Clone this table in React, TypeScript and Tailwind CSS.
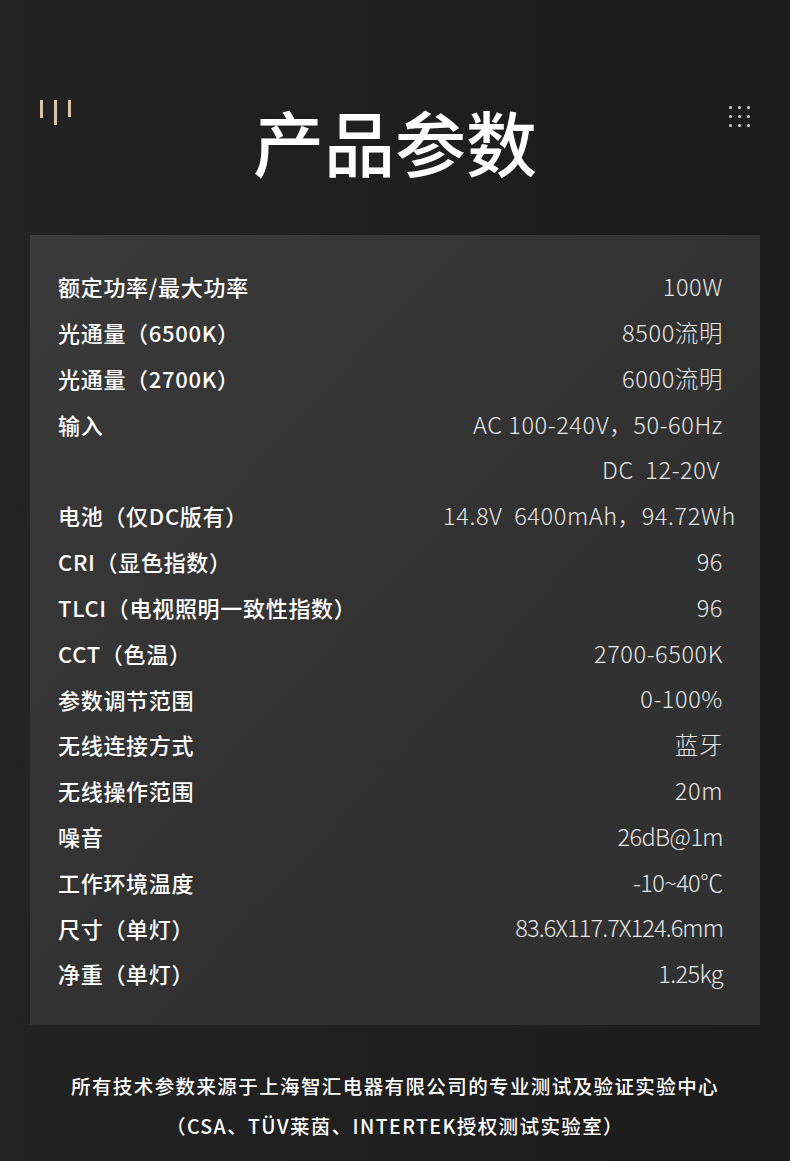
import React from "react";

const rows: { label: string; value: string; shift?: string; track?: string }[] = [
  { label: "额定功率/最大功率", value: "100W" },
  { label: "光通量（6500K）", value: "8500流明" },
  { label: "光通量（2700K）", value: "6000流明" },
  { label: "输入", value: "AC 100-240V，50-60Hz" },
  { label: "", value: "DC  12-20V", shift: "mr-[3px]" },
  { label: "电池（仅DC版有）", value: "14.8V  6400mAh，94.72Wh", shift: "-mr-[13px]" },
  { label: "CRI（显色指数）", value: "96" },
  { label: "TLCI（电视照明一致性指数）", value: "96" },
  { label: "CCT（色温）", value: "2700-6500K" },
  { label: "参数调节范围", value: "0-100%" },
  { label: "无线连接方式", value: "蓝牙" },
  { label: "无线操作范围", value: "20m" },
  { label: "噪音", value: "26dB@1m", track: "tracking-[-0.6px]" },
  { label: "工作环境温度", value: "-10~40℃", track: "tracking-[-0.6px]" },
  { label: "尺寸（单灯）", value: "83.6X117.7X124.6mm", track: "tracking-[-0.9px]" },
  { label: "净重（单灯）", value: "1.25kg", track: "tracking-[-0.6px]" },
];

function BarsMark() {
  return (
    <div className="flex items-start gap-[11px]">
      <span className="block w-[3px] h-[18px] bg-[#d9c4a9]" />
      <span className="block w-[3px] h-[25px] bg-[#d9c4a9]" />
      <span className="block w-[3px] h-[17px] bg-[#d9c4a9]" />
    </div>
  );
}

function DotsMark() {
  return (
    <div className="grid grid-cols-3 gap-x-[6px] gap-y-[6px]">
      {Array.from({ length: 9 }).map((_, i) => (
        <span key={i} className="block w-[3px] h-[3px] rounded-full bg-[#cfcfcf]" />
      ))}
    </div>
  );
}

export default function App() {
  return (
    <div
      className="w-[790px] h-[1161px] overflow-hidden bg-gradient-to-r from-[#232323] to-[#1b1b1b] text-white"
      style={{ fontFamily: '"Noto Sans CJK SC", "Noto Sans", sans-serif' }}
    >
      {/* header */}
      <div className="relative h-[235px]">
        <div className="absolute left-[40px] top-[100px]">
          <BarsMark />
        </div>
        <div className="absolute left-[729px] top-[106px]">
          <DotsMark />
        </div>
        <h1 className="pt-[94px] text-center text-[71px] leading-[92px] font-medium">
          产品参数
        </h1>
      </div>

      {/* spec panel */}
      <div className="mx-[30px] h-[790px] bg-gradient-to-br from-[#3a3a3a] via-[#323232] to-[#303030] pl-[28px] pr-[37px] pt-[29px]">
        {rows.map((r, i) => (
          <div key={i} className="flex h-[45.8px] items-center justify-between">
            <span className="text-[22px] font-medium tracking-[0.7px] text-white whitespace-nowrap">
              {r.label}
            </span>
            <span
              className={
                "text-[23.5px] font-light text-[#e6e6e6] whitespace-pre " +
                (r.track ?? "tracking-[0.6px]") +
                " " +
                (r.shift ?? "")
              }
            >
              {r.value}
            </span>
          </div>
        ))}
      </div>

      {/* footnote */}
      <div className="pt-[41px] text-center text-[19.5px] font-medium leading-[40px] tracking-[1.4px] text-white">
        <p>所有技术参数来源于上海智汇电器有限公司的专业测试及验证实验中心</p>
        <p>（CSA、TÜV莱茵、INTERTEK授权测试实验室）</p>
      </div>
    </div>
  );
}
